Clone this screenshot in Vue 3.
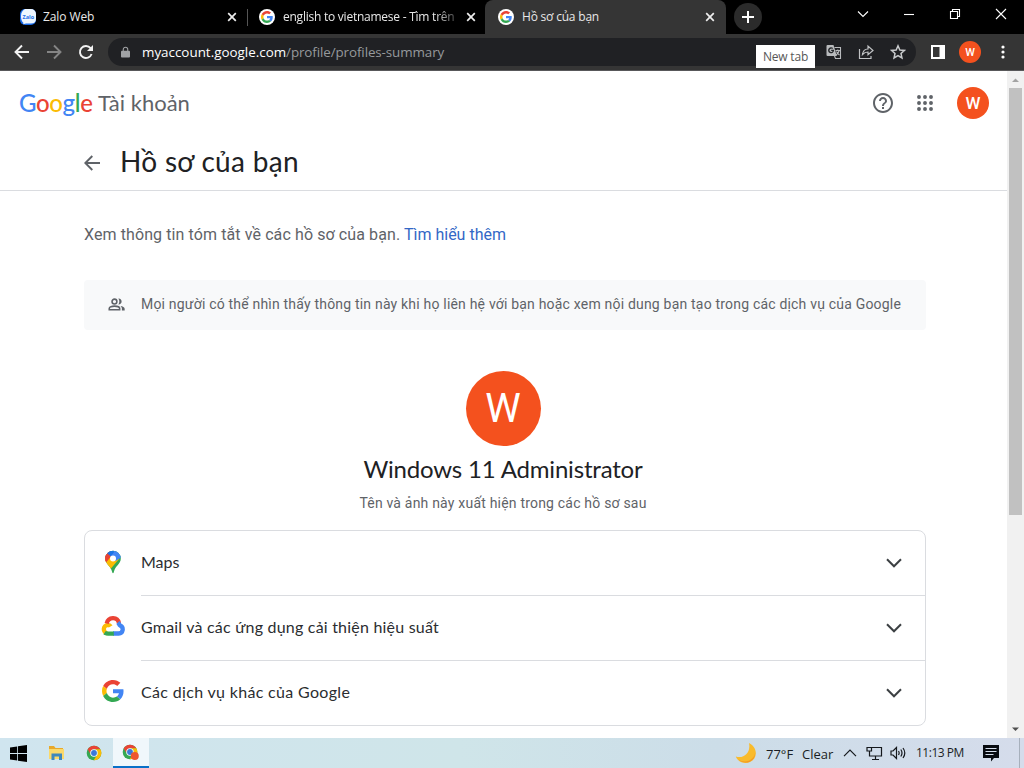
<script setup>
import { ref } from 'vue'

const tabs = ref([
  { title: 'Zalo Web', icon: 'zalo', cls: 'tab-zalo' },
  { title: 'english to vietnamese - Tìm trên', icon: 'google', cls: 'tab-search' },
  { title: 'Hồ sơ của bạn', icon: 'google', cls: 'tab-active' },
])

const services = ref([
  { name: 'Maps', icon: 'maps', cls: 'name-maps' },
  { name: 'Gmail và các ứng dụng cải thiện hiệu suất', icon: 'cloud', cls: 'name-gmail' },
  { name: 'Các dịch vụ khác của Google', icon: 'google', cls: 'name-other' },
])

const logo = ['G', 'o', 'o', 'g', 'l', 'e']
</script>

<template>
  <div class="screen">
    <!-- shared symbols -->
    <svg class="defs" width="0" height="0">
      <symbol id="google" viewBox="0 0 48 48">
        <path fill="#EA4335" d="M24 9.5c3.54 0 6.71 1.22 9.21 3.6l6.85-6.85C35.9 2.38 30.47 0 24 0 14.62 0 6.51 5.38 2.56 13.22l7.98 6.19C12.43 13.72 17.74 9.5 24 9.5z" />
        <path fill="#4285F4" d="M46.98 24.55c0-1.57-.15-3.09-.38-4.55H24v9.02h12.94c-.58 2.96-2.26 5.48-4.78 7.18l7.73 6c4.51-4.18 7.09-10.36 7.09-17.65z" />
        <path fill="#FBBC05" d="M10.53 28.59c-.48-1.45-.76-2.99-.76-4.59s.27-3.14.76-4.59l-7.98-6.19C.92 16.46 0 20.12 0 24c0 3.88.92 7.54 2.56 10.78l7.97-6.19z" />
        <path fill="#34A853" d="M24 48c6.48 0 11.93-2.13 15.89-5.81l-7.73-6c-2.15 1.45-4.92 2.3-8.16 2.3-6.26 0-11.57-4.22-13.47-9.91l-7.98 6.19C6.51 42.62 14.62 48 24 48z" />
      </symbol>
      <symbol id="maps" viewBox="0 0 24 24">
        <clipPath id="pin">
          <path d="M12 .8a7.8 7.8 0 0 0-7.8 7.8c0 5.6 5.4 7.2 6.8 13 .3 1.1.5 1.6 1 1.6s.7-.5 1-1.6c1.4-5.8 6.8-7.4 6.8-13A7.8 7.8 0 0 0 12 .8z" />
        </clipPath>
        <g clip-path="url(#pin)">
          <path fill="#34A853" d="M0 0h24v24H0z" />
          <path fill="#FBBC04" d="M0 8l8-1 10 2L7 22 0 17z" />
          <path fill="#EA4335" d="M4-1l-4 0v9l4.8 4.6L12 4z" />
          <path fill="#1A73E8" d="M6 3.4l4.5 4L14 2 8-1z" />
          <path fill="#4285F4" d="M9-1h15v5.8l-9.4 6.3-5.2-4.4 4-5z" />
          <path fill="#EA4335" d="M3 5l3-1.8 3.8 3.2-4.7 5.8L2 10z" />
        </g>
        <circle cx="12" cy="8.6" r="3" fill="#fff" />
      </symbol>
      <symbol id="cloud" viewBox="0 0 24 22">
        <g fill="none" stroke-width="4.3">
          <path stroke="#FBBC04" d="M6.4 18.5A4.4 4.4 0 0 1 6.7 9.8q2 0 3 1.6" />
          <path stroke="#EA4335" d="M5.7 8.5C7.2 1.8 16.4 1.2 18 8.2" />
          <path stroke="#4285F4" d="M16.9 7.5C18.4 9 17.8 9.8 19.2 10.5c3.8 2 3.2 7.6-1.6 8H12" />
          <path stroke="#34A853" d="M3.6 17.8q1.2.8 3.2.8h6" />
        </g>
      </symbol>
      <symbol id="zalo" viewBox="0 0 16 16">
        <rect width="16" height="16" rx="5" fill="#1769e8" />
        <path fill="#eef7ff" d="M5 0h6a5 5 0 0 1 5 5v5c0 3-2 4.500-5 4.500H6L3 15.300 3.500 14C1.700 12.500 1 10 1 7 1 3 3 1 5 0z" />
      </symbol>
      <symbol id="chrome" viewBox="0 0 24 24">
        <circle cx="12" cy="12" r="11" fill="#34A853" />
        <path fill="#EA4335" d="M2.500 6.500a11 11 0 0 1 19 0H12a5.500 5.500 0 0 0-4.800 8.200z" />
        <path fill="#FBBC05" d="M21.500 6.500A11 11 0 0 1 11.500 23l5.200-8.500A5.500 5.500 0 0 0 12 6.500z" />
        <circle cx="12" cy="12" r="5.600" fill="#fff" />
        <circle cx="12" cy="12" r="4.400" fill="#3b78d8" />
      </symbol>
    </svg>

    <div class="tabstrip">
      <div v-for="tab in tabs" :key="tab.title" class="tab" :class="tab.cls">
        <span class="favicon">
          <svg>
            <use :href="'#' + tab.icon" />
            <text v-if="tab.icon == 'zalo'" class="zalo-text" x="8.3" y="9.5" text-anchor="middle">Zalo</text>
          </svg>
        </span>
        <span class="tab-title"><span>{{ tab.title }}</span></span>
        <svg class="tab-close" viewBox="0 0 10 10"><path d="M1.200 1.200l7.600 7.600M8.800 1.200l-7.600 7.600" /></svg>
      </div>
      <div class="new-tab">
        <svg width="14" height="14" viewBox="0 0 14 14"><path d="M7 1v12M1 7h12" stroke="#fff" stroke-width="2" /></svg>
      </div>
      <div class="window-buttons">
        <svg viewBox="0 0 12 12"><path d="M1 3.500l5 5 5-5" /></svg>
        <svg viewBox="0 0 12 12"><path d="M1 6.500h10" /></svg>
        <svg viewBox="0 0 12 12"><path d="M1.500 3.500h7v7h-7zM3.500 3.500v-2h7v7h-2" /></svg>
        <svg viewBox="0 0 12 12"><path d="M1 1l10 10M11 1L1 11" /></svg>
      </div>
    </div>

    <div class="toolbar">
      <div class="nav">
        <svg viewBox="0 0 16 16"><path d="M15 8H2M8 1.500L1.500 8 8 14.500" /></svg>
        <svg class="dim" viewBox="0 0 16 16"><path d="M1 8h13M8 1.500L14.500 8 8 14.500" /></svg>
        <svg viewBox="0 0 16 16"><path d="M13.600 10A6 6 0 1 1 12.600 4.200L14 5.600" /><path class="solid" d="M15 1v6H9z" /></svg>
      </div>
      <div class="omnibox">
        <svg class="lock" viewBox="0 0 10 12"><path fill="#a0a2a5" d="M1 4.500h8q1 0 1 1V11q0 1-1 1H1q-1 0-1-1V5.500q0-1 1-1z" /><path d="M2.500 5V3.200a2.500 2.500 0 0 1 5 0V5" fill="none" stroke="#a0a2a5" stroke-width="1.200" /></svg>
        <span class="url"><b>myaccount.google.com</b><i>/profile/profiles-summary</i></span>
        <div class="omni-icons">
          <svg viewBox="0 0 16 16">
            <path fill="#b9bbbd" d="M1.500 1h6L10.800 12H1.500Q.5 12 .5 11V2q0-1 1-1z" />
            <path fill="#25282b" d="M8 5.800H5.200V7h1.400c-.3.800-.8 1-1.400 1a1.700 1.700 0 1 1 1.100-3l.8-.9a3 3 0 1 0 .9 2.700z" />
            <path d="M8.500 3.500h6v11h-5l-1-2.500M9.500 6.500h4.500M11.800 5.500v1M13.200 6.500c-.6 2-1.800 3.500-3.200 4.500M10.500 7.500c.8 1.700 1.800 2.800 3 3.500" fill="none" stroke="#b9bbbd" stroke-width="1.100" />
          </svg>
          <svg viewBox="0 0 16 16"><path d="M1.500 5v9.500h11.500V12M4.500 10.500C5 6.500 7 5 10 5V2l5 4.500-5 4.300V8C7.500 8 6 8.800 4.500 10.500z" fill="none" stroke="#c0c2c4" stroke-width="1.200" /></svg>
          <svg viewBox="0 0 16 16"><path d="M8 1.800l1.850 4.150 4.550.45-3.400 3.050.95 4.450L8 11.600l-3.950 2.300.95-4.450L1.600 6.400l4.550-.45z" fill="none" stroke="#c8cacc" stroke-width="1.500" /></svg>
        </div>
        <div class="tooltip"><span>New tab</span></div>
      </div>
      <svg class="panel" viewBox="0 0 14 14"><path fill="#fff" fill-rule="evenodd" d="M0 0h14v14H0zM2 2v10h6.500V2z" /></svg>
      <div class="avatar small">W</div>
      <svg class="more" viewBox="0 0 4 14"><circle cx="2" cy="2" r="1.600" /><circle cx="2" cy="7" r="1.600" /><circle cx="2" cy="12" r="1.600" /></svg>
    </div>

    <div class="viewport">
      <div class="page">
        <header>
          <div class="brand">
            <span class="logo"><span v-for="(ch, i) in logo" :key="i" :class="'l' + i">{{ ch }}</span></span>
            <span class="product">Tài khoản</span>
          </div>
          <svg class="help" viewBox="0 0 24 24"><path fill="#5f6368" d="M11 18h2v-2h-2v2zm1-16C6.480 2 2 6.480 2 12s4.480 10 10 10 10-4.480 10-10S17.520 2 12 2zm0 18c-4.410 0-8-3.590-8-8s3.590-8 8-8 8 3.590 8 8-3.590 8-8 8zm0-14c-2.210 0-4 1.790-4 4h2c0-1.100.9-2 2-2s2 .9 2 2c0 2-3 1.750-3 5h2c0-2.250 3-2.500 3-5 0-2.210-1.790-4-4-4z" /></svg>
          <svg class="apps" viewBox="0 0 16 16">
            <template v-for="y in 3" :key="y">
              <circle v-for="x in 3" :key="x" :cx="x * 6 - 4" :cy="y * 6 - 4" r="1.950" />
            </template>
          </svg>
          <div class="avatar medium">W</div>
        </header>

        <div class="title-bar">
          <svg viewBox="0 0 16 16"><path d="M16 8H1.500M8.300 1L1.300 8l7 7" fill="none" stroke="#5f6368" stroke-width="1.900" /></svg>
          <h1>Hồ sơ của bạn</h1>
        </div>

        <main>
          <p class="intro"><span>Xem thông tin tóm tắt về các hồ sơ của bạn.</span> <a>Tìm hiểu thêm</a></p>
          <div class="notice">
            <svg viewBox="0 0 18 14">
              <g fill="none" stroke="#5f6368" stroke-width="1.700">
                <circle cx="6.800" cy="3.800" r="2.600" />
                <path d="M1.200 12.700v-1.500c0-3.300 11.200-3.300 11.200 0v1.500z" />
              </g>
              <path fill="#5f6368" d="M11 .5c4.700-.3 4.700 6.600 0 6.500 1.400-2 1.400-4.500 0-6.500zM13.200 8.500c2.600.4 4.600 1.300 4.600 3v2h-3v-2.300c0-1-.6-1.900-1.600-2.700z" />
            </svg>
            <span>Mọi người có thể nhìn thấy thông tin này khi họ liên hệ với bạn hoặc xem nội dung bạn tạo trong các dịch vụ của Google</span>
          </div>
          <section class="profile">
            <div class="avatar large">W</div>
            <h2>Windows 11 Administrator</h2>
            <p>Tên và ảnh này xuất hiện trong các hồ sơ sau</p>
          </section>
          <div class="card">
            <div v-for="item in services" :key="item.name" class="row">
              <svg class="row-icon"><use :href="'#' + item.icon" /></svg>
              <div class="row-body">
                <span :class="item.cls">{{ item.name }}</span>
                <svg class="chevron" viewBox="0 0 16 10"><path d="M1 1.300l7 7 7-7" fill="none" stroke="#3c4043" stroke-width="2" /></svg>
              </div>
            </div>
          </div>
        </main>
      </div>
      <div class="scrollbar">
        <svg width="17" height="17" viewBox="0 0 17 17"><path d="M5 11l3.500-3.500L12 11z" fill="#a3a3a3" /></svg>
        <div class="thumb"></div>
        <svg width="17" height="17" viewBox="0 0 17 17"><path d="M5 6.500h7L8.500 10z" fill="#505050" /></svg>
      </div>
    </div>

    <div class="taskbar">
      <div class="apps-pinned">
        <div class="task"><svg width="17" height="17" viewBox="0 0 17 17"><path d="M0 2.400l7.200-1v6.700H0zM8 1.300L17 0v8.100H8zM0 8.900h7.200v6.700L0 14.600zM8 8.900h9V17l-9-1.300z" /></svg></div>
        <div class="task">
          <svg width="17" height="16" viewBox="0 0 17 16"><path fill="#e8a92c" d="M1 1h5l1.500 2H15v4H1z" /><path fill="#fbd96b" d="M1 4h15v10H1z" /><path fill="#3f87bd" d="M3.500 15V8.500h10.500V15h-3v-3.500H6.500V15z" /></svg>
        </div>
        <div class="task"><svg width="16" height="16"><use href="#chrome" /></svg></div>
        <div class="task open">
          <svg width="18" height="17" viewBox="0 0 18 17"><use href="#chrome" x="0" y="0" width="16" height="16" /><circle cx="12.800" cy="12" r="4" fill="#ee5630" /></svg>
        </div>
      </div>
      <div class="tray">
        <svg class="moon" width="22" height="22" viewBox="0 0 22 22"><path fill="#f9bb2c" d="M14 1c9 4.500 8.800 15.500 1 19C9 22.500 3 20 .8 14.500 9 17 16 10.500 14 1z" /><path fill="#f39a27" d="M20.300 8c1 8.500-9 15-17 9.300C9 23.500 21.500 21 20.300 8z" /></svg>
        <span class="temp">77°F</span>
        <span class="sky">Clear</span>
        <svg class="up" width="14" height="8" viewBox="0 0 14 8"><path d="M1 7.200l6-6 6 6" /></svg>
        <svg class="net" width="17" height="15" viewBox="0 0 17 15"><path d="M5.500 1.500h10v8.500H3.500V6M9.500 10v3.500M6 13.500h7M1 1.500h4.500V5H1zM3.500 5v2" /></svg>
        <svg class="vol" width="17" height="14" viewBox="0 0 17 14"><path d="M1 5h2l3.500-3.500v11L3 9H1zM8.500 5q1.300 2 0 4M10.800 3.500q2.400 3.500 0 7M13 2q3.600 5 0 10" /></svg>
        <span class="clock">11:13 PM</span>
        <svg class="msg" width="16" height="17" viewBox="0 0 16 17"><path fill="#080b10" d="M0 0h16v13H11L8 16.500V13H0z" /><path d="M2.500 3.500h11M2.500 6.500h11M2.500 9.500h8" stroke="#d5deeb" /></svg>
        <div class="desktop-edge"></div>
      </div>
    </div>
  </div>
</template>

<style>
body {
  margin: 0;
  overflow: hidden;
}
</style>

<style scoped>
.screen {
  width: 1024px;
  height: 768px;
  display: flex;
  flex-direction: column;
  overflow: hidden;
  background: #fff;
  font-family: "Open Sans", "Noto Sans", sans-serif;
}
.defs {
  position: absolute;
}
svg {
  flex: none;
}

/* tab strip */
.tabstrip {
  height: 34px;
  background: #000;
  display: flex;
  flex: none;
}
.tab {
  box-sizing: border-box;
  display: flex;
  align-items: center;
  color: #e8e8e8;
  font-size: 12px;
}
.tab-zalo {
  width: 247px;
  padding-left: 20px;
  padding-right: 10px;
}
.tab-search {
  width: 238px;
  padding-left: 12px;
  padding-right: 9px;
  background: linear-gradient(#555, #555) 0 9px / 1px 17px no-repeat;
}
.tab-active {
  width: 241px;
  padding-left: 13px;
  padding-right: 11px;
  background: #353535;
  border-radius: 8px 8px 0 0;
}
.favicon {
  width: 16px;
  height: 16px;
  display: flex;
  align-items: center;
  justify-content: center;
  border-radius: 50%;
  background: #fff;
}
.tab-zalo .favicon {
  background: none;
}
.favicon svg {
  width: 12px;
  height: 12px;
}
.tab-zalo .favicon svg {
  width: 16px;
  height: 16px;
}
.zalo-text {
  font-size: 5.5px;
  font-weight: 700;
  fill: #2670e8;
}
.tab-title {
  flex: 1;
  margin-left: 8px;
  white-space: nowrap;
  overflow: hidden;
  line-height: 18px;
}
.tab-zalo .tab-title {
  margin-left: 7px;
  letter-spacing: -0.1px;
}
.tab-active .tab-title {
  letter-spacing: -0.2px;
}
.tab-search .tab-title {
  letter-spacing: -0.24px;
  margin-right: 11px;
  -webkit-mask-image: linear-gradient(90deg, #000 88%, rgba(0, 0, 0, 0.3));
}
.tab-close {
  width: 10px;
  height: 10px;
  fill: none;
  stroke: #eee;
  stroke-width: 1.7;
}
.new-tab {
  width: 28px;
  height: 28px;
  margin: 3px 0 0 8px;
  border-radius: 50%;
  background: #2b2b2b;
  display: flex;
  align-items: center;
  justify-content: center;
}
.window-buttons {
  margin-left: auto;
  display: flex;
  gap: 34px;
  padding: 8px 17px 0 0;
}
.window-buttons svg {
  width: 12px;
  height: 12px;
  fill: none;
  stroke: #fff;
  stroke-width: 1.1;
}

/* toolbar */
.toolbar {
  box-sizing: border-box;
  height: 37px;
  flex: none;
  background: #353535;
  border-bottom: 1px solid #58585a;
  display: flex;
  align-items: center;
}
.nav {
  display: flex;
  gap: 16px;
  padding: 0 14px;
}
.nav svg {
  width: 16px;
  height: 16px;
  fill: none;
  stroke: #f2f2f2;
  stroke-width: 1.9;
}
.nav .dim {
  stroke: #858585;
}
.nav .solid {
  fill: #f2f2f2;
  stroke: none;
}
.omnibox {
  position: relative;
  box-sizing: border-box;
  width: 808px;
  height: 28px;
  border-radius: 14px;
  background: #202124;
  display: flex;
  align-items: center;
  padding: 0 10px 0 13px;
}
.lock {
  width: 9px;
  height: 12px;
}
.url {
  margin-left: 12px;
  font-size: 13.4px;
  line-height: 20px;
}
.url b {
  font-weight: 400;
  color: #fff;
}
.url i {
  font-style: normal;
  letter-spacing: -0.1px;
  color: #96999c;
}
.omni-icons {
  margin-left: auto;
  display: flex;
  gap: 16px;
}
.omni-icons svg {
  width: 16px;
  height: 16px;
}
.tooltip {
  position: absolute;
  left: 648px;
  top: 7px;
  width: 59px;
  height: 23px;
  background: #fff;
  color: #575757;
  font-size: 12px;
  line-height: 24px;
  letter-spacing: -0.2px;
  text-align: center;
}
.panel {
  width: 14px;
  height: 14px;
  margin-left: 15px;
}
.avatar {
  border-radius: 50%;
  background: #f4511e;
  color: #fff;
  text-align: center;
  font-family: Roboto, sans-serif;
  flex: none;
}
.avatar.small {
  width: 22px;
  height: 22px;
  margin-left: 14px;
  font-size: 11px;
  font-weight: 500;
  line-height: 23px;
}
.more {
  width: 4px;
  height: 14px;
  margin-left: 20px;
  fill: #fff;
}

/* page */
.viewport {
  height: 667px;
  flex: none;
  display: flex;
  overflow: hidden;
}
.page {
  width: 1007px;
}
.scrollbar {
  width: 17px;
  background: #f1f1f1;
  display: flex;
  flex-direction: column;
}
.thumb {
  width: 13px;
  height: 427px;
  margin: 0 2px auto;
  background: #c1c1c1;
}
header {
  height: 64px;
  box-sizing: border-box;
  padding: 0 18px 0 19px;
  display: flex;
  align-items: center;
}
.brand {
  display: flex;
  flex: 1;
  white-space: nowrap;
  line-height: 30px;
}
.logo {
  width: 79px;
  font-family: Lato, "Open Sans", sans-serif;
  font-size: 24px;
  font-weight: 500;
  letter-spacing: -0.35px;
}
.l0, .l3 { color: #4285f4; }
.l1, .l5 { color: #ea4335; }
.l2 { color: #fbbc05; }
.l4 { color: #34a853; }
.product {
  color: #5f6368;
  font-family: Lato, "Open Sans", sans-serif;
  font-size: 22px;
}
.help {
  width: 24px;
  height: 24px;
}
.apps {
  width: 16px;
  height: 16px;
  margin: 0 24px 0 22px;
  fill: #5f6368;
}
.avatar.medium {
  width: 32px;
  height: 32px;
  font-size: 17px;
  font-weight: 500;
  line-height: 33px;
}
.title-bar {
  box-sizing: border-box;
  height: 56px;
  border-bottom: 1px solid #dadce0;
  padding-left: 84px;
  display: flex;
  align-items: center;
}
.title-bar svg {
  width: 16px;
  height: 16px;
}
h1 {
  margin: 0 0 3px 20px;
  font-family: Lato, "Open Sans", sans-serif;
  font-size: 28px;
  font-weight: 400;
  line-height: 36px;
  letter-spacing: 0.3px;
  color: #202124;
  white-space: nowrap;
}
main {
  width: 842px;
  margin-left: 84px;
  font-family: Roboto, sans-serif;
  color: #5f6368;
}
.intro {
  margin: 0;
  padding-top: 32px;
  font-size: 16px;
  line-height: 24px;
  white-space: nowrap;
}
.intro span {
  letter-spacing: 0.1px;
}
.intro a {
  color: #3367c6;
}
.notice {
  box-sizing: border-box;
  height: 50px;
  margin-top: 33px;
  padding-left: 24px;
  padding-bottom: 2px;
  border-radius: 4px;
  background: #f8f9fa;
  display: flex;
  align-items: center;
  font-size: 14px;
  letter-spacing: 0.195px;
  white-space: nowrap;
}
.notice svg {
  width: 17px;
  height: 13px;
  margin: 1px 16px 0 0;
}
.profile {
  display: flex;
  flex-direction: column;
  align-items: center;
  padding: 41px 4px 0 0;
}
.avatar.large {
  width: 75px;
  height: 75px;
  font-size: 40px;
  line-height: 76px;
}
h2 {
  margin: 7px 0 0;
  font-family: Lato, "Open Sans", sans-serif;
  font-size: 24px;
  font-weight: 400;
  line-height: 32px;
  letter-spacing: -0.18px;
  color: #202124;
}
.profile p {
  margin: 8px 0 0;
  font-size: 14px;
  line-height: 20px;
  letter-spacing: 0.2px;
}
.card {
  box-sizing: border-box;
  height: 196px;
  margin-top: 17px;
  border: 1px solid #dadce0;
  border-radius: 8px;
}
.row {
  height: 65px;
  display: flex;
}
.row-icon {
  width: 24px;
  height: 22px;
  margin: 19px 12px 0 16px;
}
.row:first-child .row-icon {
  height: 24px;
}
.row-body {
  flex: 1;
  margin-left: 4px;
  padding-right: 23px;
  display: flex;
  align-items: center;
  justify-content: space-between;
  border-bottom: 1px solid #dadce0;
  font-family: Lato, "Open Sans", sans-serif;
  font-size: 16px;
  color: #2b2d30;
}
.row-body span {
  padding-bottom: 3px;
}
.row:last-child .row-body {
  border-bottom-color: transparent;
}
.name-gmail {
  letter-spacing: 0.21px;
}
.name-other {
  letter-spacing: 0.33px;
}
.chevron {
  width: 16px;
  height: 10px;
}

/* taskbar */
.taskbar {
  height: 30px;
  flex: none;
  background: linear-gradient(90deg, #d0e5ef, #cfe5e9 45%, #ccdde8 70%, #d5dceb);
  display: flex;
  justify-content: space-between;
}
.apps-pinned,
.tray {
  display: flex;
  align-items: center;
}
.task {
  box-sizing: border-box;
  width: 37.5px;
  height: 30px;
  display: flex;
  align-items: center;
  justify-content: center;
}
.task:first-child {
  padding-right: 1px;
}
.task.open {
  width: 36.5px;
  background: #f0f7fb;
  border-bottom: 2px solid #0870c8;
}
.tray {
  font-size: 13px;
  color: #1a1e24;
  white-space: nowrap;
}
.tray path {
  fill: none;
  stroke: #15181c;
  stroke-width: 1.2;
}
.tray .moon path:first-child {
  fill: #f9bb2c;
  stroke: none;
}
.tray .moon path:last-child {
  fill: #f39a27;
  stroke: none;
}
.temp {
  width: 36px;
  margin-left: 9px;
  padding-top: 2px;
}
.sky {
  width: 41px;
  padding-top: 2px;
}
.net {
  margin-left: 9px;
}
.vol {
  margin-left: 7px;
}
.clock {
  width: 67px;
  margin-left: 9px;
  padding-bottom: 1px;
  font-size: 12px;
  letter-spacing: -0.5px;
}
.tray .msg path:first-child {
  fill: #080b10;
  stroke: none;
}
.tray .msg path:last-child {
  stroke: #d5deeb;
}
.desktop-edge {
  width: 4px;
  height: 30px;
  margin-left: 20px;
  border-left: 1px solid #a7b0bc;
}
</style>
